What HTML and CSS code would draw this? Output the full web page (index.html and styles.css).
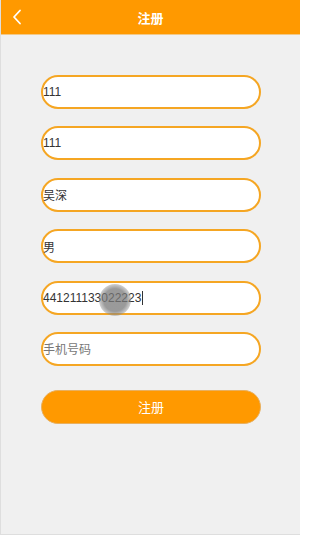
FILE: index.html
```html
<!DOCTYPE html>
<html lang="zh">
<head>
<meta charset="utf-8">
<title>注册</title>
<link rel="stylesheet" href="styles.css">
</head>
<body>
<div class="page">
  <header class="topbar">
    <span class="back">
      <svg width="12" height="16" viewBox="0 0 12 16"><path d="M9 1.5 L3 8 L9 14.5" fill="none" stroke="#fff" stroke-width="1.8" stroke-linecap="round" stroke-linejoin="round"/></svg>
    </span>
    <h1 class="title">注册</h1>
  </header>
  <form class="form">
    <div class="field">111</div>
    <div class="field">111</div>
    <div class="field">吴深</div>
    <div class="field">男</div>
    <div class="field focus">441211133022223<span class="caret"></span><span class="touch"></span></div>
    <div class="field placeholder">手机号码</div>
    <div class="btn">注册</div>
  </form>
</div>
</body>
</html>
```
FILE: styles.css
```css
* { box-sizing: border-box; }
html, body { margin: 0; padding: 0; background: #fff; overflow: hidden; }
.page {
  width: 300px;
  height: 535px;
  border-left: 1px solid #dedede;
  border-bottom: 1px solid #dedede;
  background: #f0f0f0;
  font-family: "Liberation Sans", "Noto Sans CJK SC", sans-serif;
}
.topbar {
  height: 35px;
  background: #ff9900;
  border-bottom: 1px solid #f2c887;
  display: flex;
  align-items: center;
  justify-content: center;
  position: relative;
}
.back {
  position: absolute;
  left: 10px;
  top: 9px;
  display: flex;
}
.title {
  margin: 0;
  font-size: 13px;
  font-weight: bold;
  color: #fff;
}
.form {
  padding: 40px 0 0 40px;
  display: flex;
  flex-direction: column;
  gap: 17.4px;
}
.field {
  width: 220px;
  height: 34px;
  border: 2px solid #f5a623;
  border-radius: 17px;
  background: #fff;
  font-size: 12px;
  color: #333;
  display: flex;
  align-items: center;
  padding-left: 0;
  position: relative;
}
.placeholder { color: #777; }
.caret {
  display: inline-block;
  width: 1px;
  height: 14px;
  background: #333;
  margin-left: 1px;
}
.touch {
  position: absolute;
  left: 56px;
  top: 1px;
  width: 32px;
  height: 32px;
  border-radius: 50%;
  background: radial-gradient(circle, rgba(120,120,120,0.75) 0, rgba(120,120,120,0.75) 50%, rgba(150,150,150,0.4) 72%, rgba(150,150,150,0) 100%);
}
.btn {
  margin-top: 7px;
  width: 220px;
  height: 34px;
  border-radius: 17px;
  background: #ff9900;
  border: 1px solid #e8b060;
  color: #fff;
  font-size: 13px;
  display: flex;
  align-items: center;
  justify-content: center;
  padding-bottom: 2px;
}
```
